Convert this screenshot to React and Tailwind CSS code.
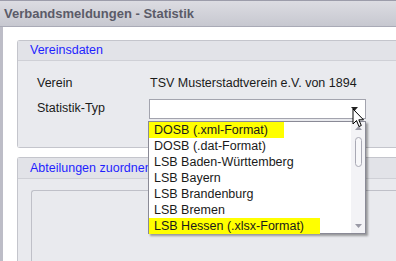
import React from "react";

const font = { fontFamily: "'Liberation Sans', Arial, sans-serif" };

const items = [
  { label: "DOSB (.xml-Format)", hl: true },
  { label: "DOSB (.dat-Format)" },
  { label: "LSB Baden-Württemberg" },
  { label: "LSB Bayern" },
  { label: "LSB Brandenburg" },
  { label: "LSB Bremen" },
  { label: "LSB Hessen (.xlsx-Format)", hl: true },
];

const Dropdown = () => (
  <div className="absolute left-[148px] top-[121px] w-[218px] h-[113px] bg-white border border-[#8a8a96] shadow-[2px_2px_2px_rgba(0,0,0,0.35)] flex">
    <div className="flex-1 flex flex-col">
      {items.map((it) => (
        <div key={it.label} className="h-[16px] flex items-center">
          <span className={"h-[16px] leading-[16px] pl-[5px] pr-[16px] " + (it.hl ? "bg-[#ffff00]" : "")}>
            {it.label}
          </span>
        </div>
      ))}
    </div>
    <div className="w-[14px] bg-[#f3f3f6] flex flex-col items-center">
      <svg width="7" height="4" className="mt-[4px]"><path d="M0 4 L3.5 0 L7 4 Z" fill="#9a9aa6" /></svg>
      <div className="mt-[7px] w-[7px] h-[30px] rounded-full border border-[#a9a9b4] bg-[#f7f7f9]" />
      <div className="flex-1" />
      <svg width="7" height="4" className="mb-[5px]"><path d="M0 0 L7 0 L3.5 4 Z" fill="#9a9aa6" /></svg>
    </div>
  </div>
);

const Cursor = () => (
  <svg className="absolute left-[352px] top-[108px]" width="14" height="21" viewBox="0 0 14 21">
    <path d="M1 1 L1 16 L4.5 12.5 L7 18.5 L9.3 17.5 L6.8 11.8 L11.5 11.8 Z" fill="white" stroke="black" strokeWidth="1" strokeLinejoin="miter" />
  </svg>
);

export default function App() {
  return (
    <div className="relative w-[396px] h-[261px] overflow-hidden bg-white text-[12.5px] text-[#1a1a1a]" style={font}>
      <div className="h-[27px] border-t border-[#9c9caa] border-b border-b-[#a9aab6] bg-gradient-to-b from-[#dcdce2] to-[#c7c8d0] flex items-center pl-[4px]">
        <span className="font-bold text-[13px] text-[#5b5b68]">Verbandsmeldungen - Statistik</span>
      </div>
      <div className="flex h-[234px]">
        <div className="w-[3px] bg-[#bdbdc7]" />
        <div className="flex-1 pl-[14px] pt-[13px] flex flex-col">
          <div className="border-l border-t border-b border-[#c4c5cc] rounded-l-[3px] h-[108px] flex flex-col">
            <div className="h-[20px] bg-[#e2e3e8] border-b border-[#cfd0d6] flex items-center pl-[12px] text-[#1f1fff]">
              Vereinsdaten
            </div>
            <div className="flex-1 bg-[#e9eaee] pl-[19px] pt-[15px] flex flex-col gap-[8px]">
              <div className="flex h-[15px] items-center">
                <span className="w-[113px]">Verein</span>
                <span>TSV Musterstadtverein e.V. von 1894</span>
              </div>
              <div className="flex h-[19px] items-center">
                <span className="w-[112px]">Statistik-Typ</span>
                <div className="w-[217px] h-[20px] bg-white border border-[#a3a4ae] flex justify-end items-center pr-[7px]">
                  <svg width="7" height="4"><path d="M0 0 L7 0 L3.5 4 Z" fill="#222" /></svg>
                </div>
              </div>
            </div>
          </div>
          <div className="mt-[9px] border-l border-t border-[#c4c5cc] rounded-tl-[3px] flex-1 flex flex-col">
            <div className="h-[21px] bg-[#e2e3e8] border-b border-[#cfd0d6] flex items-center pl-[12px] text-[#1f1fff]">
              Abteilungen zuordnen
            </div>
            <div className="flex-1 bg-[#e9eaee] pl-[13px] pt-[11px]">
              <div className="h-full border-l border-t border-[#bfc0c8] rounded-tl-[3px]" />
            </div>
          </div>
        </div>
      </div>
      <Dropdown />
      <Cursor />
    </div>
  );
}
